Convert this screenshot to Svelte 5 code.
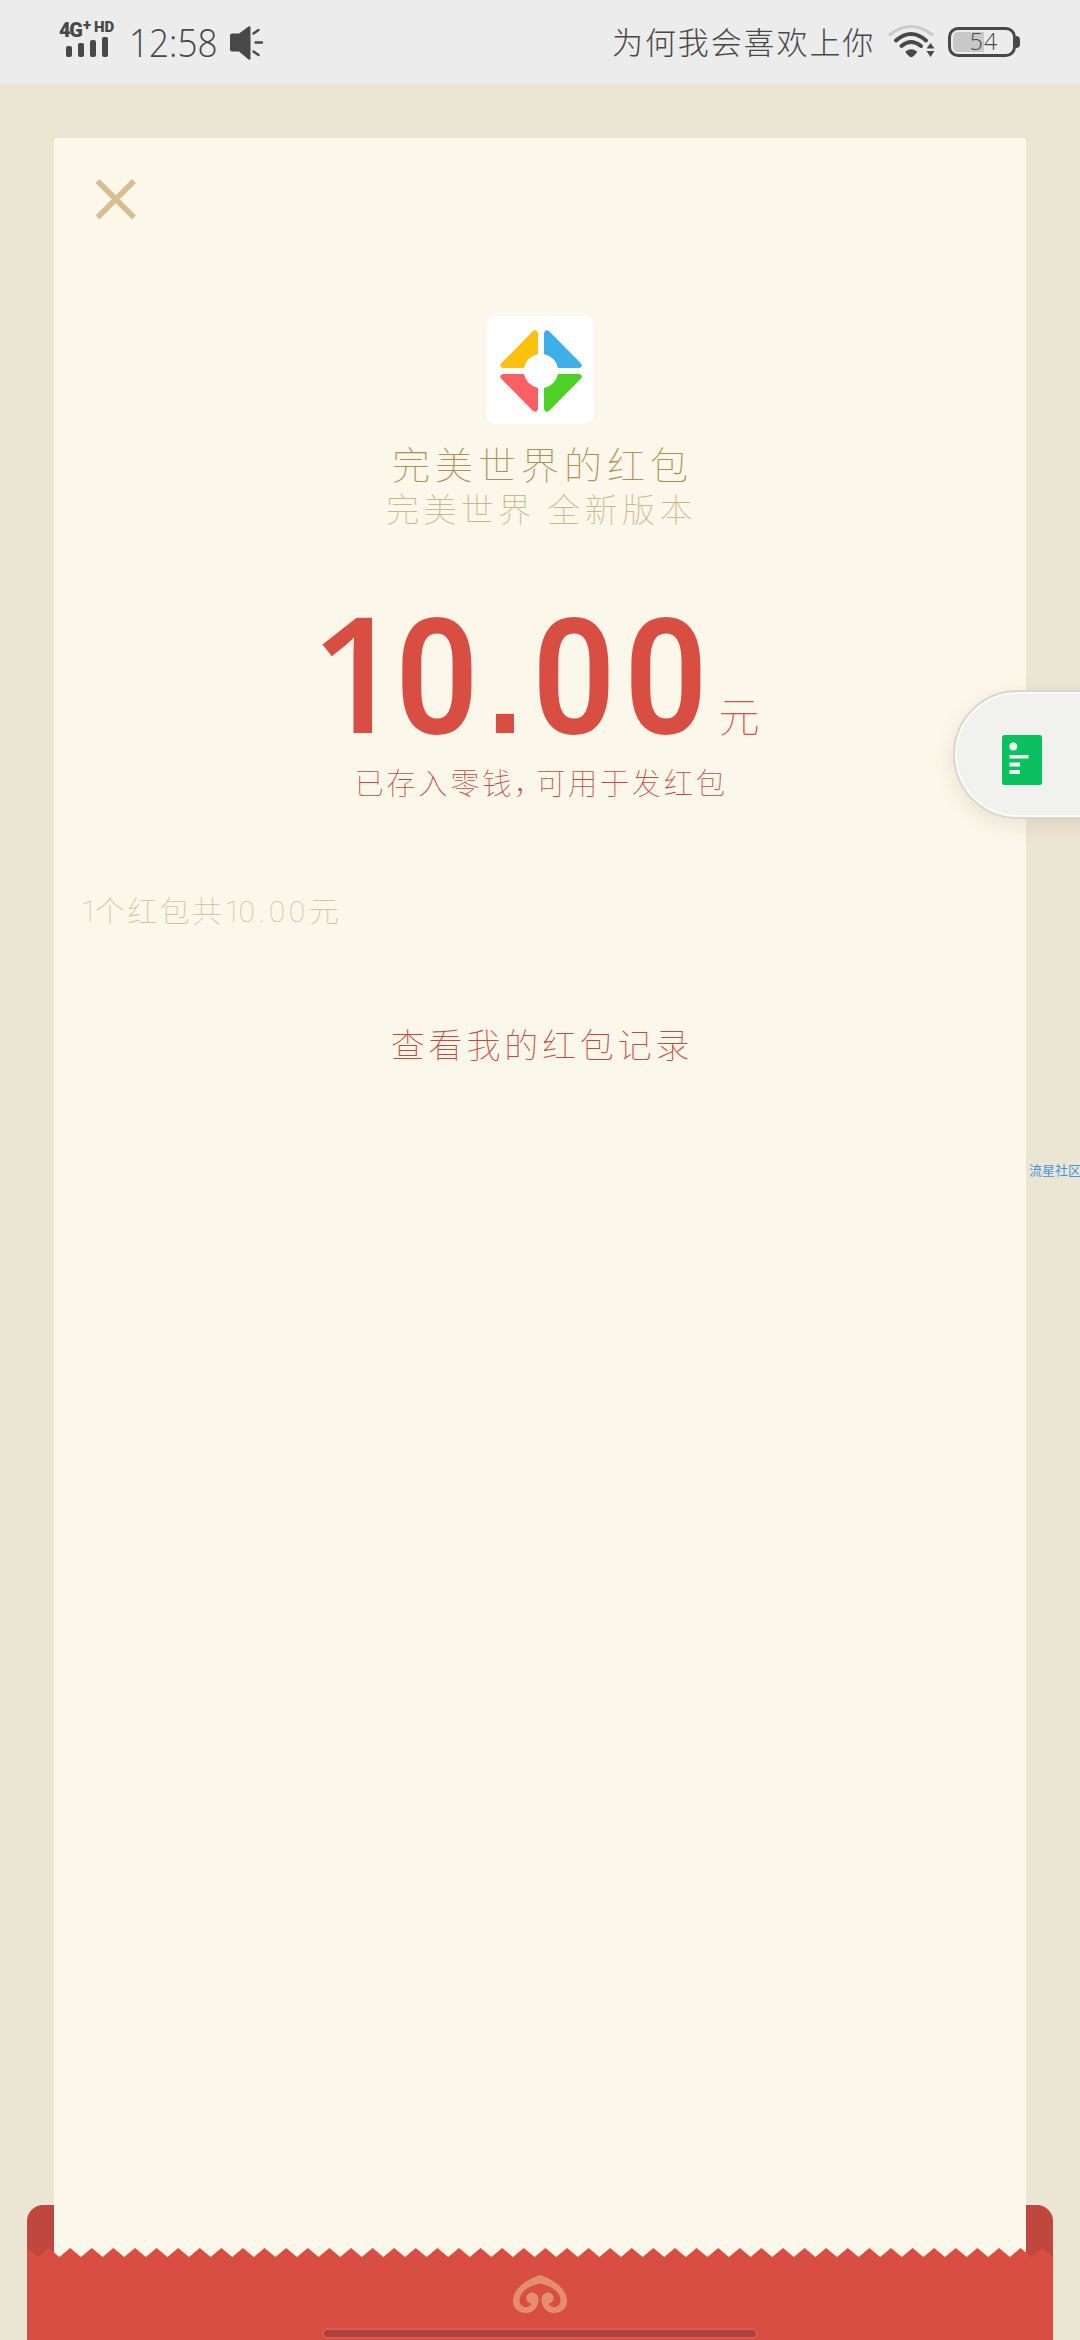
<script>
  const clock = '12:58';
  const carrier = '为何我会喜欢上你';
  const battery = 54;
  const packet = {
    title: '完美世界的红包',
    greeting: '完美世界 全新版本',
    amount: '10.00',
    unit: '元',
    count: 1
  };
  const glyphClass = (c) => (c === '1' ? 'one' : c === '.' ? 'dot' : 'digit');

  // Zigzag edge of the envelope flap
  const pitch = 21.6;
  let zigzag = 'M0 0';
  for (let i = 0; i < 48; i++) {
    zigzag += ` L${(i * pitch + pitch / 2).toFixed(1)} 9 L${((i + 1) * pitch).toFixed(1)} 0`;
  }
  zigzag += ' V92 H0 Z';
</script>

<div class="screen">
  <header class="status">
    <div class="signal">
      <div class="net"><b>4G</b><i>+</i><em>HD</em></div>
      <div class="bars"><span class="b1"></span><span class="b2"></span><span class="b3"></span><span class="b4"></span></div>
    </div>
    <span class="clock"><span>{clock}</span></span>
    <svg class="speaker" width="34" height="36" viewBox="0 0 34 36">
      <path d="M2 8.500h7L18.500 1.500q2-1 2 1v31q0 2-2 1L9 26.500H2q-2 0-2-2v-14q0-2 2-2z" fill="#484848" />
      <path d="M23.500 8.500 28.500 5M25.500 17.500H32M23.500 26.500 28.500 30" fill="none" stroke="#484848" stroke-width="2.400" stroke-linecap="round" />
    </svg>
    <span class="carrier">{carrier}</span>
    <svg class="wifi" width="48" height="36" viewBox="0 0 48 36">
      <g fill="none" stroke-linecap="round">
        <path d="M2 10.500Q23 -5.500 44 10.500" stroke="#cbcbcb" stroke-width="3" />
        <path d="M8 16.500Q23 3.500 38 16.500" stroke="#484848" stroke-width="4" />
        <path d="M13.500 22Q23 14 33 22" stroke="#484848" stroke-width="4" />
      </g>
      <path d="M17.500 27.500Q23 23 29 27.500Q29.500 28.500 25 32.500Q23 34 21.500 32.500Q17 28.500 17.500 27.500Z" fill="#484848" />
      <path d="M38.500 24.500 42.500 19 46.500 24.500ZM38.500 27 42.500 33 46.500 27Z" fill="#484848" />
    </svg>
    <div class="battery">
      <div class="cell"><div class="level" style="width:{battery}%"></div><span>{battery}</span></div>
      <div class="nub"></div>
    </div>
  </header>

  <main class="stage">
    <div class="back"></div>
    <section class="card">
      <svg class="close" width="42" height="42" viewBox="0 0 42 42">
        <path d="M2.500 2 39 38.500M39 2 2.500 38.500" stroke="#d8bd90" stroke-width="5.500" />
      </svg>
      <svg class="logo" width="108" height="108" viewBox="0 0 108 108">
        <rect width="108" height="108" rx="10" fill="#fff" />
        <path d="M52 38V17.500Q51 12.500 47 15L15 47.500Q12.500 51 17 52H38Q40.500 41 52 38Z" fill="#fcc00f" />
        <path d="M58 38V17.500Q59 12.500 63 15L95 47.500Q97.500 51 93 52H72Q69.500 41 58 38Z" fill="#3eafe9" />
        <path d="M52 72V92.500Q51 97.500 47 95L15 62.500Q12.500 59 17 58H38Q40.500 69 52 72Z" fill="#f86064" />
        <path d="M58 72V92.500Q59 97.500 63 95L95 62.500Q97.500 59 93 58H72Q69.500 69 58 72Z" fill="#4dd127" />
      </svg>
      <h1>{packet.title}</h1>
      <p class="greeting">{packet.greeting}</p>
      <div class="amount">
        <strong>{#each packet.amount as c}<span class={glyphClass(c)}>{c}</span>{/each}</strong><span class="unit">{packet.unit}</span>
      </div>
      <p class="saved">已存入零钱<span class="comma">，</span>可用于发红包</p>
      <p class="count"><span class="num lead">{packet.count}</span>个红包共<span class="num">{#each packet.amount as c}<span class:lead={c === '1'}>{c}</span>{/each}</span>元</p>
      <p class="records">查看我的红包记录</p>
    </section>
    <div class="front">
      <svg class="flap" width="1026" height="92" viewBox="0 0 1026 92">
        <path d={zigzag} fill="#d94e43" />
        <g transform="translate(486 27)" fill="#e58d71">
          <path d="M27 0C15 4 0 13 0 26C0 34 6 38 13 38C20 38 25.500 32 25.500 25C25.500 20 22.500 17.500 19 17.500C15.500 17.500 13.300 20 13.300 23C13.300 26.500 16 28 18.500 29C17.500 31 15.500 32 13 32C9 32 6.500 29.500 6.500 25.500C6.500 16 18 10 27 8.500C36 10 47.500 16 47.500 25.500C47.500 29.500 45 32 41 32C38.500 32 36.500 31 35.500 29C38 28 40.700 26.500 40.700 23C40.700 20 38.500 17.500 35 17.500C31.500 17.500 28.500 20 28.500 25C28.500 32 34 38 41 38C48 38 54 34 54 26C54 13 39 4 27 0Z" />
        </g>
      </svg>
    </div>
  </main>

  <div class="float">
    <svg width="40" height="50" viewBox="0 0 40 50">
      <rect width="40" height="50" rx="2.500" fill="#0bc15f" />
      <circle cx="11.300" cy="11.500" r="3.900" fill="#f4fbf5" />
      <path d="M7.500 20H26.500V23.500H7.500ZM7.500 27.500H18V31.500H7.500ZM7.500 35H18V39H7.500Z" fill="#f4fbf5" />
    </svg>
  </div>
  <div class="mark">流星社区</div>
  <div class="home"></div>
</div>

<style>
  :global(body) { margin: 0; background: #ebe5d3; }
  .screen {
    position: relative; width: 1080px; height: 2340px; overflow: hidden;
    background: #ebe5d3; display: flex; flex-direction: column;
    font-family: "Noto Sans CJK SC", sans-serif; font-weight: 100;
  }
  h1, p { margin: 0; font-weight: 100; white-space: nowrap; }
  .status {
    height: 84px; flex: none; background: #ececec; color: #484848;
    display: flex; align-items: flex-start; box-sizing: border-box; padding-left: 59px;
  }
  .signal { width: 70px; padding-top: 20px; }
  .net { display: flex; height: 18px; font-family: Roboto, sans-serif; font-weight: 900; align-items: flex-start; }
  .net b { font-size: 20px; line-height: 20px; letter-spacing: -1.300px; width: 24px; font-weight: 900; }
  .net i { font-style: normal; font-size: 15px; line-height: 11px; width: 11px; }
  .net em { font-style: normal; font-size: 15px; line-height: 15px; }
  .bars { display: flex; gap: 6px; align-items: flex-end; height: 19px; padding-left: 7px; }
  .bars span { width: 6px; border-radius: 2px; background: #484848; }
  .b1 { height: 11px; } .b2 { height: 14px; } .b3 { height: 17px; } .b4 { height: 20px; }
  .clock { width: 100px; font-family: "Open Sans", sans-serif; font-weight: 300; font-size: 39px; line-height: 84px; }
  .clock span { display: inline-block; transform: scaleX(.9); transform-origin: 0 50%; }
  .speaker { margin: 25px 0 0 1px; }
  .carrier { margin-left: 348px; width: 276px; font-size: 31px; letter-spacing: 1.900px; line-height: 82px; font-weight: 300; white-space: nowrap; }
  .wifi { margin-top: 24px; width: 48px; }
  .battery { display: flex; align-items: center; margin: 27px 0 0 12px; }
  .cell { position: relative; box-sizing: border-box; width: 68px; height: 30px; border: 3px solid #484848; border-radius: 10px; padding: 2px; }
  .level { height: 20px; border-radius: 5px 0 0 5px; background: #c8c8c8; }
  .cell span { position: absolute; inset: 0; text-align: center; font: 300 23px/22px "Open Sans", sans-serif; letter-spacing: 1px; padding-left: 4px; }
  .nub { width: 4px; height: 12px; border-radius: 0 4px 4px 0; background: #484848; }

  .stage { flex: 1; display: grid; grid-template: 1fr / 1fr; }
  .back, .card, .front { grid-area: 1 / 1; }
  .back { align-self: end; height: 135px; margin: 0 27px; border-radius: 16px 16px 0 0; background: #c0473e; }
  .card {
    margin: 54px 54px 80px; background: #fbf7ea; border-radius: 3px 3px 0 0;
    display: flex; flex-direction: column; align-items: center;
  }
  .close { align-self: flex-start; margin: 41px 0 0 41px; }
  .logo { margin-top: 95px; }
  h1 { margin-top: 14px; font-size: 38px; line-height: 50px; letter-spacing: 5px; color: #b08d52; padding-left: 5px; }
  .greeting { font-size: 33px; line-height: 40px; letter-spacing: 4.400px; word-spacing: 0; color: #cdb68c; padding-left: 3px; }
  .amount { display: flex; width: 459px; height: 140px; margin-top: 73px; color: #d94e43; align-items: baseline; }
  .amount strong { display: flex; align-items: baseline; font: 600 161px/140px "Open Sans", sans-serif; }
  .one { width: 80px; }
  .digit { width: 92px; display: flex; justify-content: center; font: 600 162px/140px Roboto, sans-serif; transform: scaleX(.9); }
  .dot { width: 45px; text-align: center; font: 700 128px/140px "Liberation Sans", sans-serif; }
  .unit { font-size: 41px; line-height: 37px; margin-left: 7px; position: relative; top: -1px; }
  .saved { margin-top: 20px; font-size: 29.300px; line-height: 40px; letter-spacing: 2.600px; color: #c04a40; padding-left: 2px; }
  .comma { font-feature-settings: "halt"; margin-right: 5px; }
  .count { align-self: flex-start; margin: 88px 0 0 27px; font-size: 30px; line-height: 40px; letter-spacing: 2.400px; color: #d3c2a2; }
  .num { font-family: Roboto, sans-serif; font-weight: 100; letter-spacing: 3.700px; }
  .lead { letter-spacing: -2.500px; }
  .records { margin-top: 87px; font-size: 34px; line-height: 50px; letter-spacing: 3.800px; color: #c24840; padding-left: 4px; }
  .front { align-self: end; height: 92px; margin: 0 27px; z-index: 1; }
  .flap { display: block; }

  .float {
    position: absolute; left: 953px; top: 690px; width: 140px; height: 129px; box-sizing: border-box;
    border: 2px solid #dbd7cc; border-radius: 65px 0 0 65px; background: #f1f1f0;
    box-shadow: inset 0 0 0 2px #fafaf8, 0 6px 20px rgba(110, 90, 40, .13);
    padding: 43px 0 0 47px;
  }
  .mark { position: absolute; left: 1029px; top: 1160px; font-size: 13px; line-height: 20px; white-space: nowrap; color: #4296e0; font-weight: 400; }
  .home { position: absolute; left: 324px; top: 2330px; width: 432px; height: 7px; border-radius: 4px; background: #a9433b; box-shadow: 0 0 0 1.500px #de6157; z-index: 2; }
</style>
